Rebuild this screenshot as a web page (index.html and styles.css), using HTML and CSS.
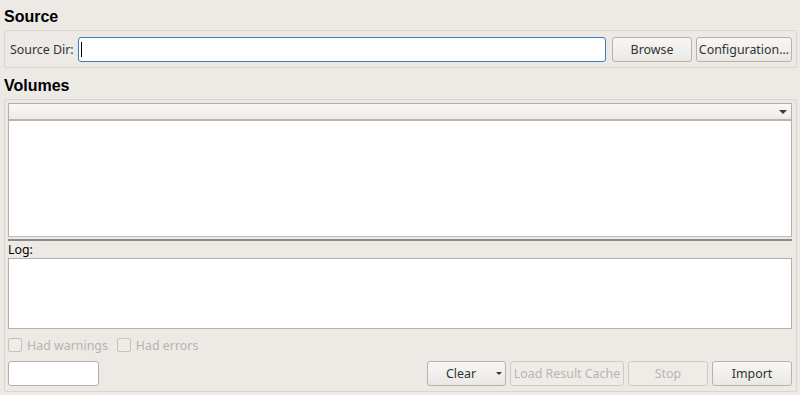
FILE: index.html
```html
<!DOCTYPE html>
<html lang="en">
<head>
  <meta charset="UTF-8">
  <title>Import</title>
  <link rel="stylesheet" href="styles.css">
</head>
<body>
  <h2 class="section-title">Source</h2>
  <div class="frame source-frame">
    <label class="field-label" for="sourceDir">Source Dir:</label>
    <div class="input-wrap">
      <input class="text-input focused" id="sourceDir" type="text">
      <span class="caret"></span>
    </div>
    <button class="btn btn-browse">Browse</button>
    <button class="btn btn-config">Configuration...</button>
  </div>

  <h2 class="section-title volumes-title">Volumes</h2>
  <div class="frame volumes-frame">
    <div class="tree">
      <div class="tree-header">
        <span class="arrow"></span>
      </div>
      <div class="tree-body"></div>
    </div>
    <div class="splitter"></div>
    <div class="log-label">Log:</div>
    <div class="log-box"></div>

    <div class="check-row">
      <label class="check disabled"><span class="check-box"></span>Had warnings</label>
      <label class="check disabled"><span class="check-box"></span>Had errors</label>
    </div>

    <div class="action-row">
      <input class="text-input small-input" type="text">
      <div class="spacer"></div>
      <button class="btn btn-clear">Clear<span class="arrow"></span></button>
      <button class="btn btn-cache" disabled>Load Result Cache</button>
      <button class="btn btn-stop" disabled>Stop</button>
      <button class="btn btn-import">Import</button>
    </div>
  </div>
</body>
</html>
```

FILE: styles.css
```css
html, body {
  margin: 0;
  padding: 0;
}
body {
  background: #edeae6;
  font-family: "Noto Sans", sans-serif;
  font-size: 12.4px;
  color: #2e3436;
  width: 800px;
  height: 395px;
  overflow: hidden;
}
.section-title {
  font-family: "Liberation Sans", Arial, sans-serif;
  font-weight: bold;
  font-size: 16px;
  line-height: 20px;
  color: #000;
  margin: 7px 0 3px 4px;
}
.volumes-title {
  margin-top: 8px;
}
.frame {
  margin: 0 3px 0 4px;
  border: 1px solid #d9d5d0;
  border-radius: 2px;
  box-sizing: border-box;
}
.source-frame {
  height: 38px;
  display: flex;
  align-items: center;
  gap: 4px;
  padding: 0 4px 0 5px;
}
.field-label {
  color: #2e3436;
}
.input-wrap {
  flex: 1;
  position: relative;
  display: flex;
  margin-right: 2px;
}
.text-input {
  height: 25px;
  box-sizing: border-box;
  border: 1px solid #b3afa9;
  border-radius: 3px;
  background: #fff;
  font: inherit;
  padding: 0 4px;
  outline: none;
}
.focused {
  flex: 1;
  border-color: #3f7bbb;
}
.caret {
  position: absolute;
  left: 3px;
  top: 5px;
  width: 1px;
  height: 15px;
  background: #000;
}
.btn {
  height: 25px;
  box-sizing: border-box;
  border: 1px solid #b6b2ac;
  border-radius: 3px;
  background: linear-gradient(#f8f7f5, #ebe8e4);
  font-family: "Noto Sans", sans-serif;
  font-size: 12.4px;
  color: #2e3436;
  padding: 0;
  display: flex;
  align-items: center;
  justify-content: center;
}
.btn:disabled {
  color: #b9b5b0;
  border-color: #cfcbc6;
  background: #efece8;
}
.btn-browse { width: 80px; }
.btn-config { width: 96px; }

.volumes-frame {
  height: 293px;
  padding: 3px 4px 0 3px;
  display: flex;
  flex-direction: column;
}
.tree {
  height: 134px;
  box-sizing: border-box;
  border: 1px solid #b3afa9;
  border-bottom-color: #bdb9b4;
  background: #fff;
  display: flex;
  flex-direction: column;
}
.tree-header {
  height: 17px;
  box-sizing: border-box;
  background: linear-gradient(#faf8f6, #eeebe7);
  border-bottom: 2px solid #b8b4ae;
  display: flex;
  justify-content: flex-end;
  align-items: center;
  padding-right: 4px;
}
.arrow {
  width: 0;
  height: 0;
  border-left: 4px solid transparent;
  border-right: 4px solid transparent;
  border-top: 4px solid #3a3a3a;
}
.tree-body {
  flex: 1;
}
.splitter {
  height: 5px;
  box-sizing: border-box;
  border-top: 2px solid transparent;
  display: flex;
  flex-direction: column;
}
.splitter::before {
  content: "";
  height: 2px;
  background: #8f8c87;
}
.log-label {
  line-height: 16px;
  color: #000;
}
.log-box {
  height: 71px;
  box-sizing: border-box;
  border: 1px solid #b3afa9;
  background: #fff;
}
.check-row {
  height: 18px;
  margin: 7px 0;
  display: flex;
  align-items: center;
  gap: 9px;
}
.check {
  display: flex;
  align-items: center;
  gap: 5px;
}
.check.disabled {
  color: #b7b3ae;
}
.check-box {
  width: 14px;
  height: 14px;
  box-sizing: border-box;
  border: 1px solid #c5c1bc;
  border-radius: 2px;
  background: #efece8;
}
.action-row {
  height: 25px;
  display: flex;
  align-items: center;
  gap: 4px;
}
.small-input {
  width: 91px;
}
.spacer {
  flex: 1;
}
.btn-clear {
  width: 79px;
  justify-content: flex-start;
  padding-left: 18px;
}
.btn-clear .arrow {
  margin-left: 20px;
  border-left-width: 3px;
  border-right-width: 3px;
  border-top-width: 3px;
}
.btn-cache { width: 114px; }
.btn-stop { width: 80px; }
.btn-import { width: 80px; }
```
